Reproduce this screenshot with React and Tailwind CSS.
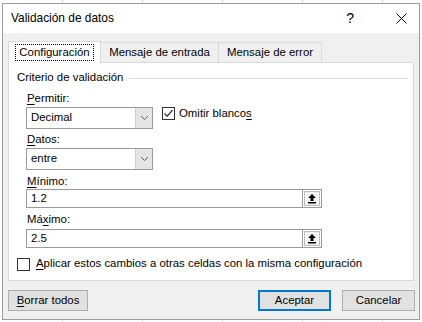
import React from 'react';

const font = { fontFamily: '"Segoe UI", "Liberation Sans", Arial, sans-serif' };

function U({ children }) {
  return <span className="underline underline-offset-[2px]">{children}</span>;
}

function Chevron() {
  return (
    <svg width="9" height="6" viewBox="0 0 9 6">
      <path d="M1 1 L4.5 4.5 L8 1" fill="none" stroke="#606060" strokeWidth="1" />
    </svg>
  );
}

function UpArrow() {
  return (
    <svg width="10" height="11" viewBox="0 0 10 11">
      <path d="M5 1 L1 5 H3.5 V8 H6.5 V5 H9 Z" fill="#000" />
      <rect x="1" y="9" width="8" height="1.5" fill="#000" />
    </svg>
  );
}

function Check({ checked }) {
  return (
    <div className="w-[13px] h-[13px] border border-[#333] bg-white flex items-center justify-center shrink-0">
      {checked && (
        <svg width="11" height="11" viewBox="0 0 11 11">
          <path d="M1.5 5.5 L4.2 8.2 L9.5 2.2" fill="none" stroke="#222" strokeWidth="1.2" />
        </svg>
      )}
    </div>
  );
}

function Select({ value }) {
  return (
    <div className="ml-[17px] w-[127px] h-[22px] border border-[#9a9a9a] bg-white flex">
      <div className="flex-1 flex items-center pl-[4px] text-[11.4px]">{value}</div>
      <div className="w-[17px] bg-[#e5e5e5] border-l border-[#cfcfcf] flex items-center justify-center">
        <Chevron />
      </div>
    </div>
  );
}

function RefInput({ value }) {
  return (
    <div className="ml-[17px] w-[296px] h-[19px] border border-[#9a9a9a] bg-white flex">
      <div className="flex-1 flex items-center pl-[4px] text-[11.4px]">{value}</div>
      <div className="w-[19px] border-l border-[#9a9a9a] p-px">
        <div className="w-full h-full border border-[#bcbcbc] bg-[#f4f4f4] flex items-center justify-center">
          <UpArrow />
        </div>
      </div>
    </div>
  );
}

function Label({ children, mt }) {
  return <div className={`ml-[18px] h-[16px] leading-[16px] text-[11.4px] ${mt}`}>{children}</div>;
}

export default function App() {
  return (
    <div
      className="w-[422px] h-[322px] bg-white pt-[3px] pl-[2px] overflow-hidden bg-[linear-gradient(to_right,#d6d6d6_1px,transparent_1px)] bg-[size:80px_100%] bg-[position:62px_0]"
      style={font}
    >
      <div className="w-[418px] h-[317px] border border-[#9c9c9c] flex flex-col text-black">
        <div className="h-[29px] bg-white flex items-center pl-[8px] shrink-0">
          <span className="text-[11.9px]">Validación de datos</span>
          <span className="ml-auto text-[14px] mr-[42px]">?</span>
          <svg width="11" height="11" viewBox="0 0 11 11" className="mr-[12px]">
            <path d="M0.5 0.5 L10.5 10.5 M10.5 0.5 L0.5 10.5" stroke="#000" strokeWidth="1" />
          </svg>
        </div>
        <div className="flex-1 bg-[#f0f0f0] pt-[8px] pl-[5px] flex flex-col">
          <div className="flex items-end h-[21px] text-[11.4px] relative z-10">
            <div className="w-[93px] h-[22px] bg-white border border-b-0 border-[#d9d9d9] flex items-center justify-center -mb-px">
              <span className="border border-dotted border-black px-[3px] h-[17px] leading-[15px]">Configuración</span>
            </div>
            <div className="w-[118px] h-[20px] border border-l-0 border-b-0 border-[#d9d9d9] flex items-center justify-center">
              Mensaje de entrada
            </div>
            <div className="w-[103px] h-[20px] border border-l-0 border-b-0 border-[#d9d9d9] flex items-center justify-center">
              Mensaje de error
            </div>
          </div>
          <div className="w-[406px] h-[219px] bg-white border border-[#d9d9d9] flex flex-col">
            <div className="flex items-center h-[16px] mt-[7px] ml-[8px] mr-[5px] text-[11.4px]">
              <span>Criterio de validación</span>
              <div className="flex-1 h-px bg-[#dcdcdc] ml-[6px]" />
            </div>
            <Label mt="mt-[4px]"><U>P</U>ermitir:</Label>
            <div className="flex items-start mt-[1px]">
              <Select value="Decimal" />
              <div className="ml-[9px] flex items-center gap-[4px] text-[11.4px] h-[13px]">
                <Check checked />
                <span>Omitir blanco<U>s</U></span>
              </div>
            </div>
            <Label mt="mt-[2px]"><U>D</U>atos:</Label>
            <div className="mt-[1px]">
              <Select value="entre" />
            </div>
            <Label mt="mt-[3px]"><U>M</U>ínimo:</Label>
            <RefInput value="1.2" />
            <Label mt="mt-[3px]">Má<U>x</U>imo:</Label>
            <div className="mt-[2px]">
              <RefInput value="2.5" />
            </div>
            <div className="flex items-center gap-[6px] mt-[8px] ml-[8px] h-[16px] text-[11.4px]">
              <Check />
              <span><U>A</U>plicar estos cambios a otras celdas con la misma configuración</span>
            </div>
          </div>
          <div className="flex mt-[9px] text-[11.4px]">
            <button className="w-[80px] h-[21px] bg-[#e1e1e1] border border-[#adadad]"><U>B</U>orrar todos</button>
            <button className="ml-auto w-[73px] h-[21px] bg-[#e1e1e1] border-2 border-[#0078d7]">Aceptar</button>
            <button className="ml-[11px] mr-[4px] w-[73px] h-[21px] bg-[#e1e1e1] border border-[#adadad]">Cancelar</button>
          </div>
        </div>
      </div>
    </div>
  );
}
